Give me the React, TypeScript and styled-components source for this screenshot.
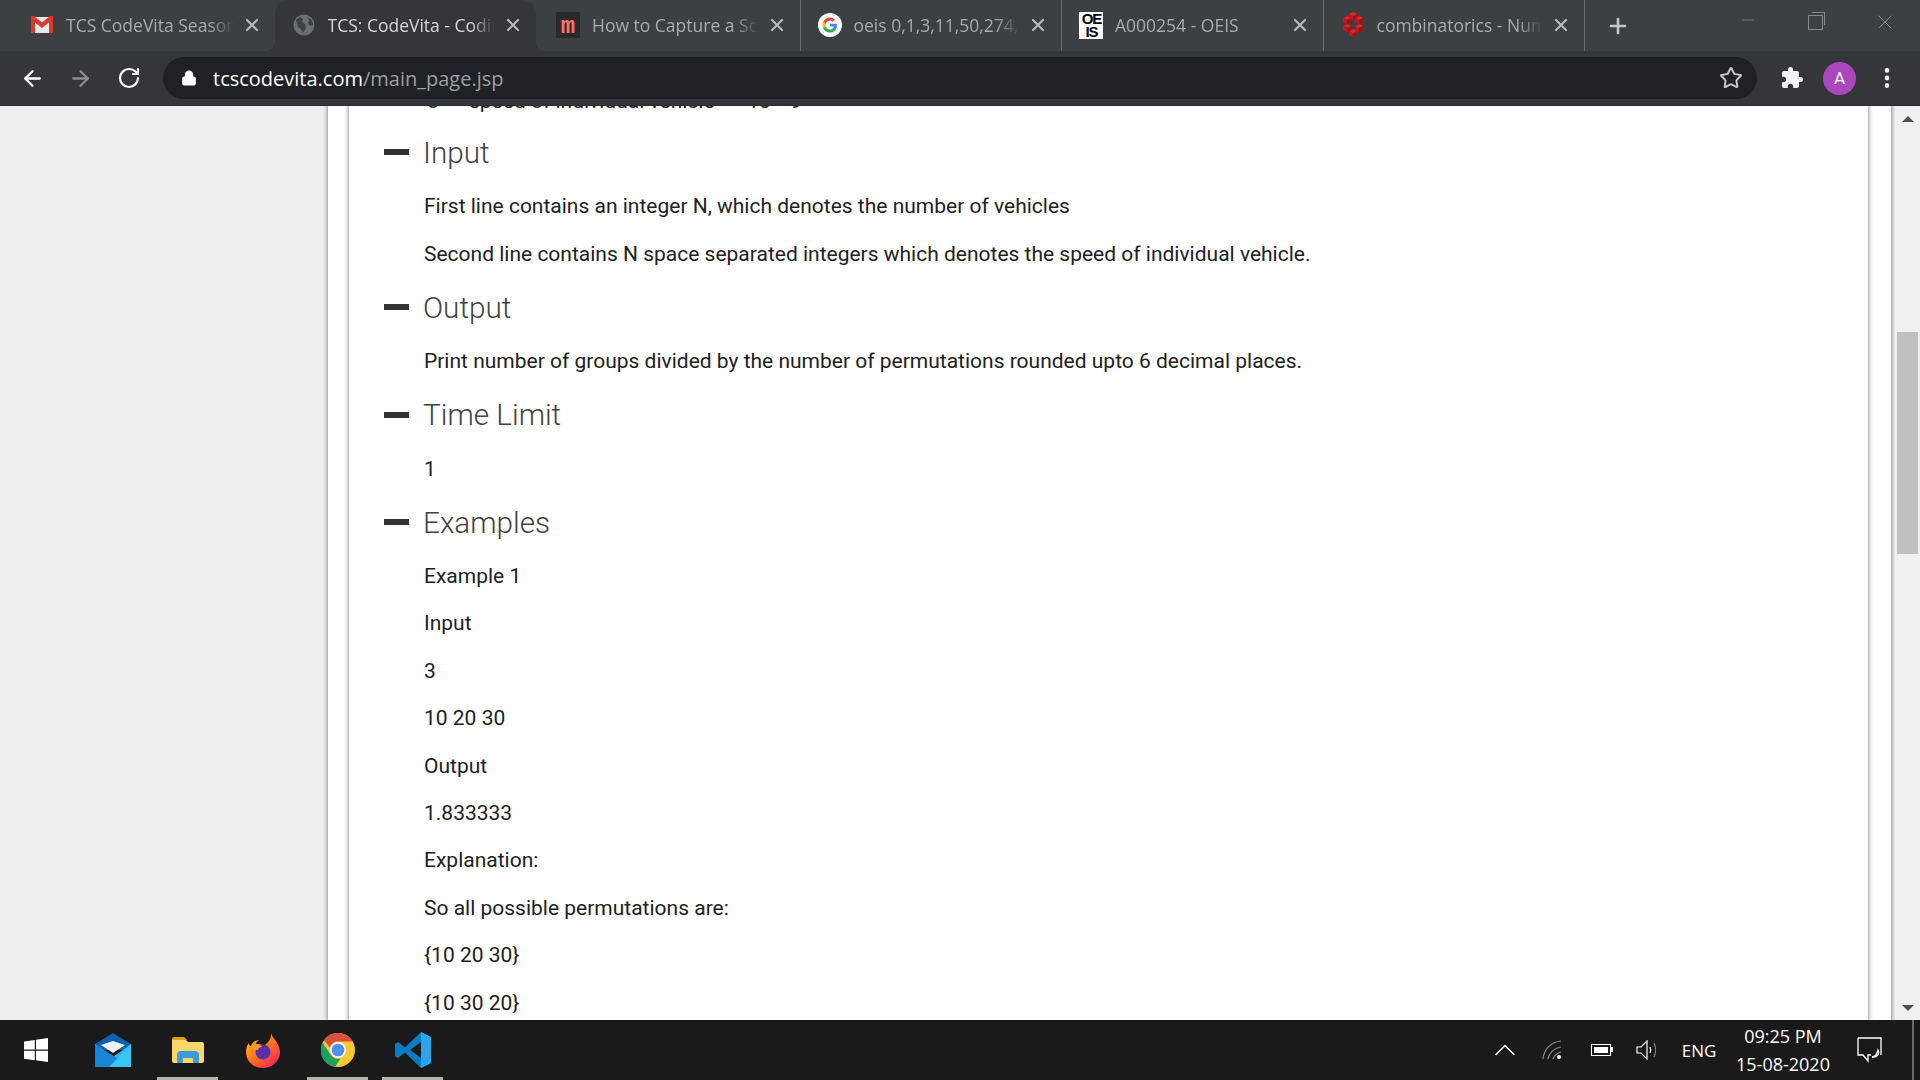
import React from 'react';
import styled, { createGlobalStyle } from 'styled-components';
import { ArrowLeft, ArrowRight, RotateCw, Lock, Star, Plus, X, Minus, ChevronUp, MoreVertical } from 'lucide-react';
import { MdExtension } from 'react-icons/md';

const GlobalStyle = createGlobalStyle`
  html, body { margin: 0; padding: 0; height: 100%; overflow: hidden; }
  * { box-sizing: border-box; }
  body { font-family: Roboto, "Liberation Sans", sans-serif; }
`;

const tabs = [
  { title: 'TCS CodeVita Season IX', icon: 'gmail' },
  { title: 'TCS: CodeVita - Coding Contest', icon: 'globe', active: true },
  { title: 'How to Capture a Screenshot', icon: 'moz' },
  { title: 'oeis 0,1,3,11,50,274,1764', icon: 'google' },
  { title: 'A000254 - OEIS', icon: 'oeis' },
  { title: 'combinatorics - Number of', icon: 'math' },
];

// six little cubes round the ring of the math.stackexchange favicon
const cubes = [
  [11, 4],
  [17, 8],
  [17, 16],
  [11, 21],
  [5, 16],
  [5, 8],
];

function Favicon({ kind }: { kind: string }) {
  if (kind === 'gmail') {
    return (
      <svg width="22" height="18" viewBox="0 0 22 18">
        <rect x="1" y="1" width="20" height="16" fill="#e8e8e8" />
        <path d="M0 17V1.500 0h3L11 6.500 19 0h3v17h-4V6.500l-7 5.500-7-5.500V17z" fill="#d93a2e" />
      </svg>
    );
  }
  if (kind === 'globe') {
    return (
      <svg width="22" height="22" viewBox="0 0 22 22">
        <circle cx="11" cy="11" r="10.500" fill="#6b6e72" />
        <path d="M3 6l4-3 3 2-1 3 3 2 1 4-3 5-2-4-3-2zM14 3l5 3 1 5-3 1-2-3 1-3z" fill="#3e4144" />
      </svg>
    );
  }
  if (kind === 'moz') {
    return <MozIcon>m</MozIcon>;
  }
  if (kind === 'google') {
    return (
      <svg width="26" height="26" viewBox="0 0 26 26">
        <circle cx="13" cy="13" r="13" fill="#fff" />
        <path d="M20.500 13.200c0-.6 0-1.100-.1-1.600H13v3.100h4.300c-.2 1-.8 1.900-1.600 2.400v2h2.600c1.500-1.400 2.200-3.500 2.200-5.900z" fill="#4285f4" />
        <path d="M13 21c2.200 0 4-.7 5.300-1.900l-2.600-2c-.7.500-1.600.8-2.700.8-2.100 0-3.900-1.400-4.500-3.300H5.800v2.100C7.100 19.300 9.900 21 13 21z" fill="#34a853" />
        <path d="M8.500 14.600c-.3-1-.3-2.100 0-3.100V9.400H5.800c-1.100 2.200-1.100 5 0 7.300z" fill="#fbbc05" />
        <path d="M13 8.200c1.200 0 2.200.4 3 1.200l2.300-2.300C16.900 5.800 15 5 13 5c-3.100 0-5.900 1.700-7.200 4.400l2.700 2.100c.6-1.900 2.400-3.300 4.500-3.300z" fill="#ea4335" />
      </svg>
    );
  }
  if (kind === 'oeis') {
    return (
      <OeisIcon>
        <span>OE</span>
        <span>IS</span>
      </OeisIcon>
    );
  }
  return (
    <svg width="22" height="26" viewBox="0 0 22 26">
      {cubes.map(([x, y]) => (
        <g key={`${x}-${y}`}>
          <path d={`M${x - 4} ${y - 2}l4-2 4 2v4l-4 2-4-2z`} fill="#9c1218" />
          <path d={`M${x - 4} ${y - 2}l4-2 4 2-4 2z`} fill="#e0242c" />
          <path d={`M${x - 4} ${y - 2}l4 2v4l-4-2z`} fill="#c4161d" />
        </g>
      ))}
    </svg>
  );
}

function TaskIcon({ kind }: { kind: string }) {
  switch (kind) {
    case 'windows':
      return (
        <svg width="24" height="24" viewBox="0 0 24 24" fill="#fff">
          <path d="M0 3.400l10.800-1.500v9.600H0zM12 1.700L24 0v11.500H12zM0 12.700h10.800v9.600L0 20.800zM12 12.700h12V24l-12-1.700z" />
        </svg>
      );
    case 'mail':
      return (
        <svg width="36" height="34" viewBox="0 0 36 34">
          <path d="M0 11L18 0l18 11v6H0z" fill="#0a62ad" />
          <path d="M6 12l12-4 12 4-12 8z" fill="#eef0f2" />
          <path d="M0 11l18 13 18-13v23H0z" fill="#2fb4f1" />
          <path d="M0 34V11l36 23z" fill="#1786d9" />
          <path d="M36 11v23H14z" fill="#38c6f7" />
        </svg>
      );
    case 'folder':
      return (
        <svg width="32" height="26" viewBox="0 0 32 26">
          <path d="M0 2a2 2 0 012-2h10l3 3h-15z" fill="#d9a300" />
          <path d="M0 3h14l2 2h14a2 2 0 012 2v17a2 2 0 01-2 2H2a2 2 0 01-2-2z" fill="#fcd86a" />
          <path d="M5 26v-8a4 4 0 014-4h14a4 4 0 014 4v8h-6v-5H11v5z" fill="#3c9bdc" />
          <rect x="11" y="21" width="10" height="5" fill="#fcd86a" />
        </svg>
      );
    case 'firefox':
      return (
        <svg width="34" height="35" viewBox="0 0 34 35">
          <defs>
            <linearGradient id="ffa" x1="0" y1="0" x2="0.800" y2="1">
              <stop offset="0" stopColor="#ffcb22" />
              <stop offset="0.500" stopColor="#ff7a1a" />
              <stop offset="1" stopColor="#f0245a" />
            </linearGradient>
          </defs>
          <path d="M25 0c1 5 8 9 9 18 .6 9-7 17-17 17S0 28 0 19c0-4 1-7 3-9 0 2 1 3 2 3 1-3 4-6 8-6-2 1-3 3-3 4 3 0 6 0 8 2 3-3 8-6 7-13z" fill="url(#ffa)" />
          <circle cx="17" cy="19" r="7.500" fill="#5b2fa8" />
          <path d="M6 14c3-3 8-3 10 0-2 0-4 1-4 3-2 0-4-1-6-3z" fill="#ff9a26" />
        </svg>
      );
    case 'chrome':
      return (
        <svg width="34" height="34" viewBox="0 0 34 34">
          <circle cx="17" cy="17" r="17" fill="#fcc934" />
          <path d="M17 0a17 17 0 0114.700 8.500H17a8.500 8.500 0 00-8 5.700L2.800 7.500A17 17 0 0117 0z" fill="#d9503f" />
          <path d="M1.500 9.500L9.600 21.500a8.500 8.500 0 0010 4.100L14 34A17 17 0 011.500 9.500z" fill="#1da35e" />
          <circle cx="17" cy="17" r="8" fill="#fff" />
          <circle cx="17" cy="17" r="6.300" fill="#4f8ef2" />
        </svg>
      );
    default:
      return (
        <svg width="36" height="36" viewBox="0 0 36 36">
          <path d="M26 0l10 5v26l-10 5-16-15.500L3 26l-3-2V12l3-2 7 5.500z" fill="#0a7cc4" />
          <path d="M26 0l10 5v26l-10 5z" fill="#2aa5ec" />
          <path d="M26 10L15 18l11 8z" fill="#1a1a1a" />
        </svg>
      );
  }
}

function App() {
  return (
    <>
      <GlobalStyle />
      <Screen>
        <TabStrip>
          {tabs.map((tab) => (
            <Tab key={tab.title} $active={tab.active}>
              <FaviconSlot>
                <Favicon kind={tab.icon} />
              </FaviconSlot>
              <TabTitle>{tab.title}</TabTitle>
              <TabClose size={20} strokeWidth={2.6} />
            </Tab>
          ))}
          <NewTab size={24} strokeWidth={2.6} />
          <WindowControls>
            <Minus size={20} strokeWidth={1} />
            <RestoreIcon />
            <X size={24} strokeWidth={1} />
          </WindowControls>
        </TabStrip>

        <Toolbar>
          <NavButton><ArrowLeft size={25} strokeWidth={2.2} /></NavButton>
          <NavButton $muted><ArrowRight size={25} strokeWidth={2.2} /></NavButton>
          <NavButton><RotateCw size={24} strokeWidth={2.2} /></NavButton>
          <UrlBar>
            <Lock size={16} strokeWidth={2.6} fill="#fff" color="#fff" />
            <UrlText>tcscodevita.com<span>/main_page.jsp</span></UrlText>
            <StarIcon size={24} strokeWidth={2} />
          </UrlBar>
          <PuzzleIcon size={24} />
          <Avatar>A</Avatar>
          <MenuIcon size={26} strokeWidth={2.4} />
        </Toolbar>

        <Page>
          <OuterCard>
            <InnerCard>
              <Problem>
                <ClippedLine>
                  <Bullet>o</Bullet>speed of individual vehicle &lt;= 10 ^ 9
                </ClippedLine>
                <Section>
                  <Dash />
                  <Heading>Input</Heading>
                </Section>
                <Text>First line contains an integer N, which denotes the number of vehicles</Text>
                <Text>Second line contains N space separated integers which denotes the speed of individual vehicle.</Text>
                <Section>
                  <Dash />
                  <Heading>Output</Heading>
                </Section>
                <Text>Print number of groups divided by the number of permutations rounded upto 6 decimal places.</Text>
                <Section>
                  <Dash />
                  <Heading>Time Limit</Heading>
                </Section>
                <Text>1</Text>
                <Section>
                  <Dash />
                  <Heading>Examples</Heading>
                </Section>
                <Text>Example 1</Text>
                <Text>Input</Text>
                <Text>3</Text>
                <Text>10 20 30</Text>
                <Text>Output</Text>
                <Text>1.833333</Text>
                <Text>Explanation:</Text>
                <Text>So all possible permutations are:</Text>
                <Text>{'{10 20 30}'}</Text>
                <Text>{'{10 30 20}'}</Text>
              </Problem>
            </InnerCard>
          </OuterCard>
          <Scrollbar>
            <ScrollArrow $up />
            <ScrollTrack>
              <ScrollThumb />
            </ScrollTrack>
            <ScrollArrow />
          </Scrollbar>
        </Page>

        <Taskbar>
          <StartButton><TaskIcon kind="windows" /></StartButton>
          <TaskItem><TaskIcon kind="mail" /></TaskItem>
          <TaskItem $open><TaskIcon kind="folder" /></TaskItem>
          <TaskItem><TaskIcon kind="firefox" /></TaskItem>
          <TaskItem $open><TaskIcon kind="chrome" /></TaskItem>
          <TaskItem $open><TaskIcon kind="code" /></TaskItem>
          <Tray>
            <TrayCell $width={50}>
              <ChevronUp size={36} strokeWidth={1} color="#fff" />
            </TrayCell>
            <TrayCell $width={48}>
              <svg width="24" height="20" viewBox="0 0 24 20" fill="none" stroke="#8d8d8d" strokeWidth="1.200">
                <path d="M1 19C2 9 9 2 19 1M6 19c1-6 6-11 13-12M11 19c1-3 4-6 8-7" />
                <circle cx="17" cy="17" r="2" fill="#fff" stroke="none" />
              </svg>
            </TrayCell>
            <TrayCell $width={46}>
              <BatteryShell><BatteryLevel /></BatteryShell>
            </TrayCell>
            <TrayCell $width={48}>
              <svg width="24" height="20" viewBox="0 0 24 20" fill="none" stroke="#fff" strokeWidth="1.200">
                <path d="M1 7h4l6-6v18l-6-6H1z" />
                <path d="M14 7c1 2 1 4 0 6" />
                <path d="M18 3c2 4 2 10 0 14" stroke="#888" />
              </svg>
            </TrayCell>
            <TrayCell $width={54}>
              <TrayLabel>ENG</TrayLabel>
            </TrayCell>
            <TrayCell $width={114}>
              <Clock>
                <span>09:25 PM</span>
                <span>15-08-2020</span>
              </Clock>
            </TrayCell>
            <TrayCell $width={60}>
              <svg width="26" height="26" viewBox="0 0 26 26" fill="none" stroke="#fff" strokeWidth="1.300">
                <path d="M1 1h23v17M1 1v17h5l5 6v-6h3" />
                <path d="M21 13c2 4-1 8-6 7 3 0 5-3 6-7z" />
              </svg>
            </TrayCell>
            <ShowDesktop />
          </Tray>
        </Taskbar>
      </Screen>
    </>
  );
}

const Screen = styled.div`
  display: flex;
  flex-direction: column;
  width: 1920px;
  height: 1080px;
  overflow: hidden;
  background: #fff;
`;

const TabStrip = styled.div`
  display: flex;
  align-items: stretch;
  height: 51px;
  padding-left: 13px;
  background: #3c4043;
  font-family: "Open Sans", "Noto Sans", sans-serif;
`;

const Tab = styled.div<{ $active?: boolean }>`
  position: relative;
  display: flex;
  flex: none;
  align-items: center;
  width: 261.500px;
  margin-right: ${(props) => (props.$active ? '3px' : '0')};
  padding: 0 13px 1px 17px;
  color: ${(props) => (props.$active ? '#d5d7da' : '#a8abae')};
  background: ${(props) => (props.$active ? '#35363a' : 'transparent')};
  border-radius: ${(props) => (props.$active ? '14px 14px 0 0' : '0')};
  border-right: ${(props) => (props.$active ? 'none' : '1px solid #6b6e72')};
  &:first-child { border-right: none; }
  ${(props) =>
    props.$active &&
    `
    &::before, &::after {
      content: '';
      position: absolute;
      bottom: 0;
      width: 10px;
      height: 10px;
    }
    &::before {
      left: -10px;
      background: radial-gradient(circle at 0 0, transparent 10px, #35363a 10.500px);
    }
    &::after {
      right: -10px;
      background: radial-gradient(circle at 100% 0, transparent 10px, #35363a 10.500px);
    }
  `}
`;

const FaviconSlot = styled.div`
  display: flex;
  flex: none;
  align-items: center;
  justify-content: center;
  width: 24px;
  height: 26px;
  margin-right: 12px;
`;

const MozIcon = styled.div`
  width: 24px;
  height: 26px;
  padding-top: 3px;
  background: #2a2a2a;
  color: #ff6f6a;
  font: bold 24px/24px "Liberation Mono", monospace;
  text-align: center;
`;

const OeisIcon = styled.div`
  display: flex;
  flex-direction: column;
  width: 24px;
  height: 27px;
  padding-left: 1px;
  background: #fff;
  color: #000;
  font: bold 15px/13.500px "Liberation Sans", sans-serif;
  letter-spacing: -1px;
  text-align: center;
`;

const TabTitle = styled.span`
  flex: 1;
  overflow: hidden;
  font-size: 17.500px;
  white-space: nowrap;
  mask-image: linear-gradient(to right, #000 85%, transparent 100%);
`;

const TabClose = styled(X)`
  flex: none;
  margin-left: 8px;
  color: #b8babd;
`;

const NewTab = styled(Plus)`
  align-self: center;
  margin: 0 0 0 21px;
  color: #c4c6c9;
`;

const WindowControls = styled.div`
  display: flex;
  gap: 50px;
  align-items: flex-start;
  margin-left: auto;
  padding: 10px 23px 0 0;
  color: #85888c;
`;

const RestoreIcon = styled.span`
  position: relative;
  width: 15px;
  height: 15px;
  margin-top: 5px;
  border: 1px solid #85888c;
  &::before {
    content: '';
    position: absolute;
    top: -4px;
    left: 3px;
    width: 12px;
    height: 12px;
    border: 1px solid #85888c;
    border-bottom: none;
    border-left: none;
  }
`;

const Toolbar = styled.div`
  display: flex;
  flex: none;
  align-items: center;
  height: 55px;
  padding: 0 20px 0 20px;
  background: #35363a;
  border-bottom: 1px solid #2a2b2e;
  color: #fff;
`;

const NavButton = styled.div<{ $muted?: boolean }>`
  display: flex;
  flex: none;
  justify-content: center;
  width: 25px;
  margin-right: 23px;
  color: ${(props) => (props.$muted ? '#8c8e91' : '#fff')};
`;

const UrlBar = styled.div`
  display: flex;
  flex: 1;
  align-items: center;
  height: 42px;
  margin: 0 23px 0 -1px;
  padding: 0 14px 0 18px;
  background: #202124;
  border-radius: 21px;
`;

const UrlText = styled.span`
  flex: 1;
  margin-left: 16px;
  font-family: "Open Sans", "Noto Sans", sans-serif;
  font-size: 20px;
  color: #fff;
  span { color: #9aa0a6; }
`;

const StarIcon = styled(Star)`
  color: #c4c6c9;
`;

const PuzzleIcon = styled(MdExtension)`
  flex: none;
  margin-right: 19px;
  color: #f1f3f4;
`;

const Avatar = styled.div`
  display: flex;
  flex: none;
  align-items: center;
  justify-content: center;
  width: 33px;
  height: 33px;
  border-radius: 50%;
  background: #ab47bc;
  color: #fff;
  font-size: 17px;
`;

const MenuIcon = styled(MoreVertical)`
  flex: none;
  margin-left: 18px;
`;

const Page = styled.div`
  display: flex;
  flex: 1;
  min-height: 0;
  overflow: hidden;
  padding-left: 328px;
  background: #eee;
`;

const OuterCard = styled.div`
  flex: 1;
  min-width: 0;
  margin-right: 4px;
  padding: 0 23px 0 21px;
  background: #fff;
  box-shadow: 0 0 4px 1px rgba(0, 0, 0, 0.4);
`;

const InnerCard = styled.div`
  height: 100%;
  overflow: hidden;
  background: #fff;
  box-shadow: 0 0 4px 1px rgba(0, 0, 0, 0.4);
`;

const Problem = styled.div`
  margin-top: -26px;
  padding-left: 35px;
`;

const ClippedLine = styled.p`
  margin: 0;
  padding-left: 43px;
  color: #212121;
  font-size: 21px;
  line-height: 43.400px;
`;

const Bullet = styled.span`
  margin-right: 30px;
`;

const Section = styled.div`
  display: flex;
  align-items: center;
  height: 60px;
  padding-bottom: 2px;
`;

const Dash = styled.span`
  flex: none;
  width: 25px;
  height: 6px;
  margin-right: 14px;
  background: #333;
`;

const Heading = styled.h3`
  margin: 0;
  color: #424242;
  font-size: 29.700px;
  font-weight: 300;
`;

const Text = styled.p`
  margin: 0;
  padding-left: 40px;
  color: #212121;
  font-size: 21px;
  line-height: 47.400px;
`;

const Scrollbar = styled.div`
  display: flex;
  flex: none;
  flex-direction: column;
  width: 25px;
  background: #f0f0f0;
`;

const ScrollArrow = styled.div<{ $up?: boolean }>`
  flex: none;
  height: 0;
  width: 0;
  margin: 8px auto;
  border-left: 6px solid transparent;
  border-right: 6px solid transparent;
  ${(props) => (props.$up ? 'border-bottom: 6px solid #505050; margin-top: 10px;' : 'border-top: 6px solid #505050; margin-bottom: 9px;')}
`;

const ScrollTrack = styled.div`
  flex: 1;
  padding: 202px 2px 0;
`;

const ScrollThumb = styled.div`
  height: 222px;
  background: #c0c0c0;
`;

const Taskbar = styled.div`
  display: flex;
  flex: none;
  align-items: center;
  height: 60px;
  background: #1a1a1a;
`;

const TaskItem = styled.div<{ $open?: boolean }>`
  position: relative;
  display: flex;
  flex: none;
  align-items: center;
  justify-content: center;
  width: 75px;
  height: 60px;
  &::after {
    content: '';
    display: ${(props) => (props.$open ? 'block' : 'none')};
    position: absolute;
    left: 7px;
    right: 7px;
    bottom: 0;
    height: 3px;
    background: #b3b3b0;
  }
`;

const StartButton = styled(TaskItem)`
  padding-right: 3px;
`;

const Tray = styled.div`
  display: flex;
  align-items: center;
  margin-left: auto;
  color: #fff;
`;

const TrayCell = styled.div<{ $width: number }>`
  display: flex;
  flex: none;
  align-items: center;
  justify-content: center;
  width: ${(props) => props.$width}px;
`;

const BatteryShell = styled.div`
  position: relative;
  width: 20px;
  height: 12px;
  padding: 2px;
  border: 1px solid #fff;
  &::after {
    content: '';
    position: absolute;
    right: -3px;
    top: 2px;
    width: 2px;
    height: 5px;
    background: #fff;
  }
`;

const BatteryLevel = styled.div`
  height: 100%;
  background: #fff;
`;

const TrayLabel = styled.span`
  font-family: "Open Sans", "Noto Sans", sans-serif;
  font-size: 17px;
`;

const Clock = styled.div`
  display: flex;
  flex-direction: column;
  align-items: center;
  gap: 5px;
  font-family: "Open Sans", "Noto Sans", sans-serif;
  font-size: 18px;
  line-height: 23px;
`;

const ShowDesktop = styled.div`
  flex: none;
  width: 2px;
  height: 60px;
  margin: 0 6px 0 12px;
  background: #6a6a6a;
`;

export default App;
